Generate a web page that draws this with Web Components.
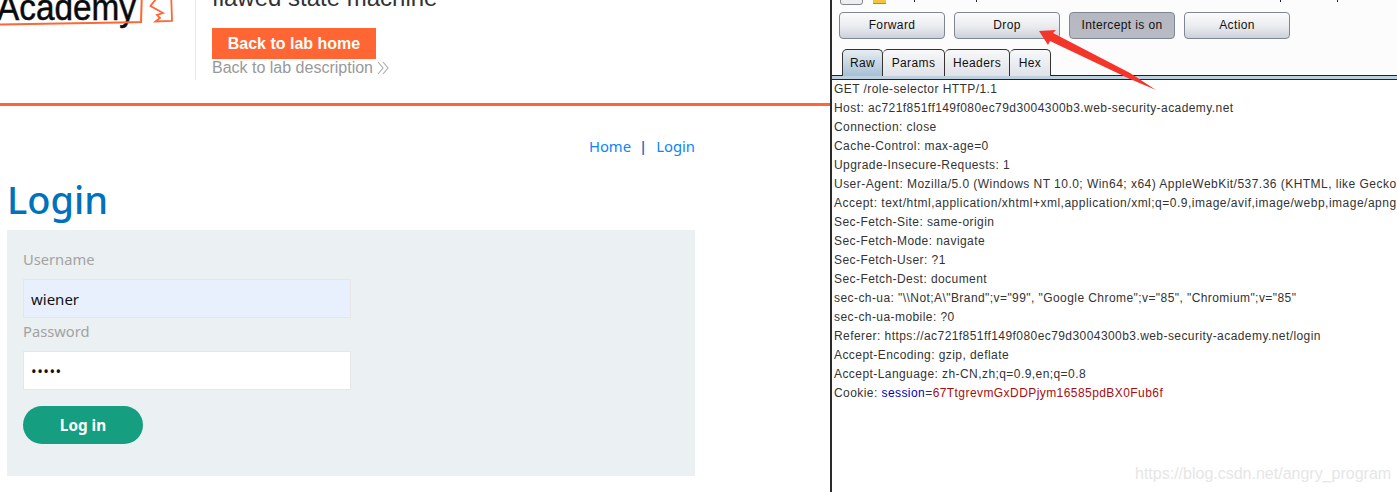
<!DOCTYPE html>
<html><head><meta charset="utf-8"><title>Login</title>
<style>
html,body{margin:0;padding:0;background:#fff}
body{width:1397px;height:492px;overflow:hidden;display:flex}
</style></head><body>
<lab-page>
  <lab-header></lab-header>
  <lab-nav></lab-nav>
  <login-form></login-form>
</lab-page>
<burp-panel>
  <req-line>GET /role-selector HTTP/1.1</req-line>
  <req-line>Host: ac721f851ff149f080ec79d3004300b3.web-security-academy.net</req-line>
  <req-line>Connection: close</req-line>
  <req-line>Cache-Control: max-age=0</req-line>
  <req-line>Upgrade-Insecure-Requests: 1</req-line>
  <req-line style="letter-spacing:.47px">User-Agent: Mozilla/5.0 (Windows NT 10.0; Win64; x64) AppleWebKit/537.36 (KHTML, like Gecko</req-line>
  <req-line style="letter-spacing:.5px">Accept: text/html,application/xhtml+xml,application/xml;q=0.9,image/avif,image/webp,image/apng</req-line>
  <req-line>Sec-Fetch-Site: same-origin</req-line>
  <req-line>Sec-Fetch-Mode: navigate</req-line>
  <req-line>Sec-Fetch-User: ?1</req-line>
  <req-line>Sec-Fetch-Dest: document</req-line>
  <req-line>sec-ch-ua: "\\Not;A\"Brand";v="99", "Google Chrome";v="85", "Chromium";v="85"</req-line>
  <req-line>sec-ch-ua-mobile: ?0</req-line>
  <req-line>Referer: https://ac721f851ff149f080ec79d3004300b3.web-security-academy.net/login</req-line>
  <req-line>Accept-Encoding: gzip, deflate</req-line>
  <req-line>Accept-Language: zh-CN,zh;q=0.9,en;q=0.8</req-line>
  <req-line>Cookie: <span style="color:#0000c0">session</span>=<span style="color:#a80c0c">67TtgrevmGxDDPjym16585pdBX0Fub6f</span></req-line>
</burp-panel>
<script>
function def(name, html){
  customElements.define(name, class extends HTMLElement{
    constructor(){super();this.attachShadow({mode:'open'}).innerHTML=html;}
  });
}
def('lab-page',`<style>:host{display:block;width:830px;flex:none;height:492px;overflow:hidden;background:#fff}</style><slot></slot>`);
def('lab-header',`<style>
:host{display:block;height:103px;border-bottom:3px solid #ff6633;overflow:hidden;box-sizing:content-box}
.row{display:flex;margin-top:-22px;height:102px}
.logo{width:196px;height:102px;box-sizing:border-box;border-right:1px solid #e6e6e6;position:relative;flex:none}
.word{position:absolute;left:-3px;top:10px;font:400 36px/40px "Liberation Sans",sans-serif;color:#0a0a0a;-webkit-text-stroke:.5px #0a0a0a;transform:scaleX(.926);transform-origin:0 0}
svg{position:absolute;left:0;top:0}
.info{padding-left:16px;display:flex;flex-direction:column;align-items:flex-start}
h2{margin:0;font:400 24px/26px "Liberation Sans",sans-serif;color:#333;height:50px;padding-top:7px;box-sizing:border-box;white-space:nowrap}
.home{display:block;background:#ff6633;color:#fff;font:700 16px/31px "Liberation Sans",sans-serif;width:164px;height:31px;text-align:center}
.desc{display:flex;align-items:center;font:400 16px/18px "Liberation Sans",sans-serif;color:#999;gap:4px}
</style>
<div class="row"><div class="logo">
<span class="word">Academy</span>
<svg width="180" height="60" viewBox="0 0 180 60" fill="none" stroke="#ff6633">
<path d="M-2 46.500 L120 44.500 L141 44 L142 12" stroke-width="2"/>
<path d="M156 21 L150.500 28 L163 35 L157 37 L160 40 L155.500 43.500 L172 43 L171 12" stroke-width="1.8"/>
</svg>
</div><div class="info">
<h2>flawed state machine</h2>
<a class="home">Back to lab home</a>
<span class="desc">Back to lab description<svg style="position:static" width="12" height="14" viewBox="0 0 12 14" fill="none" stroke="#aaa" stroke-width="1.1"><path d="M1 1l5 6-5 6M6 1l5 6-5 6"/></svg></span>
</div></div>`);
def('lab-nav',`<style>
:host{display:flex;justify-content:flex-end;width:695px;box-sizing:border-box;padding-top:31px;height:71px;font:400 14.8px/19px "Noto Sans","Open Sans",sans-serif;color:#0a84ff}
i{font-style:normal;margin:0 9px 0 8px;color:#0a6fc0;font-weight:600}
</style><span>Home</span><i>|</i><span>Login</span>`);
def('login-form',`<style>
:host{display:block;margin-left:8px;width:687px;font-family:"Noto Sans","Open Sans",sans-serif}
h1{margin:0 0 0 -1px;font:500 38px/44px "Noto Sans","Open Sans",sans-serif;color:#0071bc;height:53px;box-sizing:border-box}
.card{margin-left:-1px;width:688px;height:246px;background:#ebf0f2;padding:20px 16px 0;box-sizing:border-box}
button{display:block;margin-top:12px;width:120px;height:38px;border:0;border-radius:19px;background:#159e7f;color:#fff;font:700 15.300px/38px "Noto Sans","Open Sans",sans-serif;padding:0}
</style><h1>Login</h1><div class="card">
<form-field label="Username" value="wiener" filled></form-field>
<form-field label="Password" value="•••••"></form-field>
<button>Log in</button></div>`);
customElements.define('form-field', class extends HTMLElement{
  constructor(){super();
    const s=this.attachShadow({mode:'open'});
    const filled=this.hasAttribute('filled');
    s.innerHTML=`<style>
:host{display:block}
label{display:block;font:400 14.7px/19px "Noto Sans","Open Sans",sans-serif;color:#a3a3a3;height:19px;margin-bottom:10px}
.in{width:328px;height:39px;box-sizing:border-box;border:1px solid #e6e6e6;background:${filled?'#e8f0fe':'#fff'};padding:1px 0 0 7px;font:400 15px/37px "Noto Sans","Open Sans",sans-serif;color:#111;letter-spacing:${filled?0:.5}px}
.gap{height:4px}
</style><label>${this.getAttribute('label')}</label><div class="in">${this.getAttribute('value')}</div><div class="gap"></div>`;
  }
});
def('burp-btn',`<style>
:host{display:flex;align-items:center;justify-content:center;width:106px;height:27px;box-sizing:border-box;border:1px solid #7e8791;border-radius:4px;padding-bottom:1px;background:linear-gradient(#fbfbfc,#e9ebef 55%,#ccd0d8);font:400 12px/1 "Liberation Sans",sans-serif;letter-spacing:.38px;color:#111}
:host([on]){background:linear-gradient(#b5b8c0,#b8bbc3);}
</style><slot></slot>`);
def('burp-tab',`<style>
:host{display:flex;align-items:center;justify-content:center;height:27px;box-sizing:border-box;border:1px solid #333;border-bottom:0;border-left-width:0;border-radius:5px 5px 0 0;background:linear-gradient(#f8f8f9,#dfe2e8);font:400 12px/1 "Liberation Sans",sans-serif;letter-spacing:.4px;color:#111}
:host(:first-child){border-left-width:1px}
:host([on]){background:linear-gradient(#e6edf2,#a6c0d4)}
</style><slot></slot>`);
def('req-line',`<style>:host{display:block;height:19px;line-height:19px;white-space:nowrap}</style><slot></slot>`);
def('burp-panel',`<style>
:host{display:block;position:relative;width:567px;height:492px;flex:none;box-sizing:border-box;border-left:2px solid #2a2a2a;background:#fff;overflow:hidden}
.top{height:75px;background:#fcfcfc;position:relative;box-sizing:border-box;padding:12px 0 0 7px}
.mini{position:absolute;left:8px;top:-6px;width:23px;height:11px;border:1px solid #7e8791;border-radius:3px;background:#eee;box-sizing:border-box}
.folder{position:absolute;left:41px;top:0;width:13px;height:3px;background:#f3c43c;border:solid #b98e20;border-width:0 0 1px}
.tick{position:absolute;top:0;width:1px;height:2px;background:#223}
.btns{display:flex;gap:9px}
.tabs{display:flex;margin:10px 0 0 3px}
.tabs burp-tab:nth-child(1){width:41px}.tabs burp-tab:nth-child(2){width:62px}.tabs burp-tab:nth-child(3){width:65px}.tabs burp-tab:nth-child(4){width:41px}
.band{height:5px;box-sizing:border-box;border-top:1px solid #222;border-bottom:1px solid #222;background:#bcd0df}
.req{padding:0 0 0 2px;font:400 12px/19px "Liberation Sans",sans-serif;letter-spacing:.43px;color:#333;white-space:nowrap}
.mark{position:absolute;left:303px;top:464px;font:400 16px/20px "Liberation Sans",sans-serif;color:#e6e6e6;white-space:nowrap}
.arrow{position:absolute;left:0;top:0;pointer-events:none}
</style>
<div class="top"><div class="mini"></div><div class="folder"></div>
<i class="tick" style="left:82px"></i><i class="tick" style="left:144px"></i><i class="tick" style="left:448px"></i><i class="tick" style="left:505px"></i>
<div class="btns"><burp-btn>Forward</burp-btn><burp-btn>Drop</burp-btn><burp-btn on>Intercept is on</burp-btn><burp-btn>Action</burp-btn></div>
<div class="tabs"><burp-tab on>Raw</burp-tab><burp-tab>Params</burp-tab><burp-tab>Headers</burp-tab><burp-tab>Hex</burp-tab></div>
</div>
<div class="band"></div>
<div class="req"><slot></slot></div>
<div class="mark">https://blog.csdn.net/angry_program</div>
<svg class="arrow" width="567" height="120" viewBox="832 0 567 120"><path d="M1039 31 L1056 30 L1053 33 L1130 73 L1156 90 L1130 79 L1050 41 L1048 45 Z" fill="#f4352a"/></svg>`);
</script>
</body></html>
